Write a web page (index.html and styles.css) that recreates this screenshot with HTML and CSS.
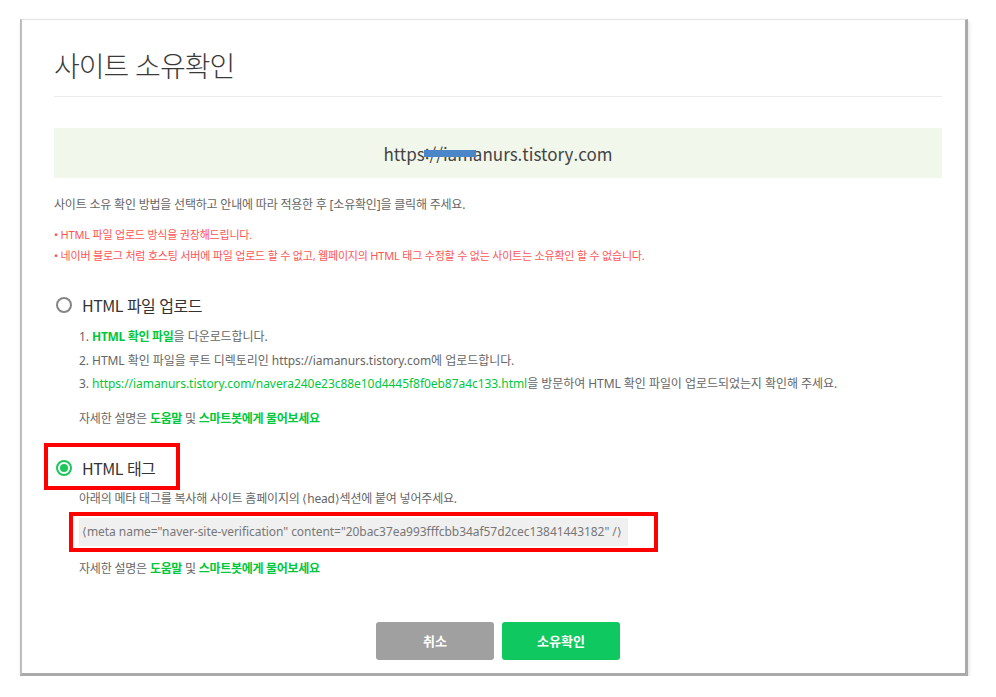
FILE: index.html
```html
<!DOCTYPE html>
<html lang="ko">
<head>
<meta charset="utf-8">
<title>사이트 소유확인</title>
<link rel="stylesheet" href="styles.css">
</head>
<body>
<div class="dialog">
  <h1 class="title">사이트 소유확인</h1>
  <div class="site-box"><span class="site-url">https://iamanurs.tistory.com<span class="redact"></span></span></div>
  <p class="desc">사이트 소유 확인 방법을 선택하고 안내에 따라 적용한 후 [소유확인]을 클릭해 주세요.</p>
  <ul class="notes">
    <li>• HTML 파일 업로드 방식을 권장해드립니다.</li>
    <li>• 네이버 블로그 처럼 호스팅 서버에 파일 업로드 할 수 없고, 웹페이지의 HTML 태그 수정할 수 없는 사이트는 소유확인 할 수 없습니다.</li>
  </ul>

  <div class="option">
    <label class="radio-row"><span class="radio"></span><span class="radio-text">HTML 파일 업로드</span></label>
    <ol class="steps">
      <li>1. <span class="link strong">HTML 확인 파일</span>을 다운로드합니다.</li>
      <li>2. HTML 확인 파일을 루트 디렉토리인 https://iamanurs.tistory.com에 업로드합니다.</li>
      <li>3. <span class="link">https://iamanurs.tistory.com/navera240e23c88e10d4445f8f0eb87a4c133.html</span>을 방문하여 HTML 확인 파일이 업로드되었는지 확인해 주세요.</li>
    </ol>
    <p class="help">자세한 설명은 <span class="link strong">도움말</span> 및 <span class="link strong">스마트봇에게 물어보세요</span></p>
  </div>

  <div class="option option-tag">
    <label class="radio-row marked"><span class="radio checked"></span><span class="radio-text">HTML 태그</span></label>
    <p class="sub">아래의 메타 태그를 복사해 사이트 홈페이지의 ⟨head⟩섹션에 붙여 넣어주세요.</p>
    <div class="meta-wrap"><div class="meta">⟨meta name="naver-site-verification" content="20bac37ea993fffcbb34af57d2cec13841443182" /⟩</div></div>
    <p class="help help-tag">자세한 설명은 <span class="link strong">도움말</span> 및 <span class="link strong">스마트봇에게 물어보세요</span></p>
  </div>

  <div class="buttons">
    <button class="btn btn-cancel">취소</button>
    <button class="btn btn-ok">소유확인</button>
  </div>
</div>
</body>
</html>
```
FILE: styles.css
```css
* { box-sizing: border-box; }
html, body { margin: 0; padding: 0; background: #fff; }
body {
  font-family: "Noto Sans", "Noto Sans CJK KR", sans-serif;
  color: #666;
  padding: 19px 0 0 20px;
}
.dialog {
  width: 948px;
  background: #fff;
  border-top: 1px solid #e4e4e4;
  border-left: 2px solid #bdbdbd;
  border-right: 3px solid #aaa;
  border-bottom: 3px solid #aaa;
  box-shadow: 1px 2px 4px rgba(0,0,0,0.12);
  padding: 25px 23px 13px 32px;
}
.title {
  margin: 0;
  font-family: "Noto Sans CJK KR", sans-serif;
  font-size: 28px;
  font-weight: 300;
  letter-spacing: -1px;
  line-height: 40px;
  color: #3a3a3a;
  padding-bottom: 11px;
  border-bottom: 1px solid #ebebeb;
}
.site-box {
  margin-top: 31px;
  height: 50px;
  background: #f1f7ea;
  display: flex;
  align-items: center;
  justify-content: center;
}
.site-url {
  position: relative;
  font-family: "Noto Sans CJK KR", sans-serif;
  font-size: 17px;
  color: #444;
}
.redact {
  position: absolute;
  left: 40px;
  top: 9px;
  width: 52px;
  height: 7px;
  background: #4a86c8;
}
.desc {
  margin: 18px 0 0;
  font-size: 12px;
  letter-spacing: -0.2px;
  line-height: 18px;
  color: #666;
}
.notes {
  list-style: none;
  margin: 10px 0 0;
  padding: 0;
  font-size: 11px;
  letter-spacing: -0.2px;
  line-height: 21px;
  color: #ff5454;
}
.option { margin-top: 27px; }
.radio-row {
  display: flex;
  align-items: center;
  height: 24px;
  padding-left: 2px;
}
.radio {
  width: 16px;
  height: 16px;
  border: 2px solid #858585;
  border-radius: 50%;
  display: flex;
  align-items: center;
  justify-content: center;
}
.radio.checked { border-color: #1dc65b; }
.radio.checked::after {
  content: "";
  width: 8px;
  height: 8px;
  border-radius: 50%;
  background: #1dc65b;
}
.radio-text {
  margin-left: 10px;
  font-family: "Noto Sans CJK KR", sans-serif;
  font-size: 16px;
  letter-spacing: -0.5px;
  color: #333;
}
.steps {
  list-style: none;
  margin: 8px 0 0;
  padding-left: 25px;
  font-size: 12px;
  letter-spacing: -0.05px;
  line-height: 23.5px;
  color: #666;
}
.link { color: #00c73c; }
.strong { font-weight: 700; letter-spacing: -0.3px; }
.help {
  margin: 14px 0 0 25px;
  font-size: 12px;
  letter-spacing: -0.2px;
  line-height: 18px;
  color: #666;
}
.option-tag { margin-top: 28px; }
.marked {
  position: relative;
  width: 112px;
  margin-left: 2px;
  padding-left: 0;
}
.marked::after {
  content: "";
  position: absolute;
  left: -12px;
  right: -12px;
  top: -13px;
  bottom: -10px;
  border: 4px solid #f00;
}
.sub {
  margin: 10px 0 0 25px;
  font-size: 12px;
  letter-spacing: -0.2px;
  line-height: 18px;
  color: #666;
}
.meta-wrap {
  position: relative;
  margin: 10px 0 0 25px;
  width: 549px;
}
.meta-wrap::after {
  content: "";
  position: absolute;
  left: -10px;
  right: -30px;
  top: -6px;
  bottom: -6px;
  border: 4px solid #f00;
}
.meta {
  height: 28px;
  background: #f0f0f0;
  padding-left: 3px;
  font-size: 12px;
  letter-spacing: -0.05px;
  line-height: 28px;
  color: #777;
  white-space: nowrap;
  overflow: hidden;
}
.help-tag { margin-top: 14px; }
.buttons {
  margin-top: 44px;
  display: flex;
  justify-content: center;
  gap: 8px;
}
.btn {
  width: 118px;
  height: 38px;
  border: none;
  border-radius: 3px;
  color: #fff;
  font-family: "Noto Sans CJK KR", sans-serif;
  font-size: 13px;
  font-weight: 700;
  cursor: pointer;
}
.btn-cancel { background: #a0a0a0; }
.btn-ok { background: #0fc860; }
```
